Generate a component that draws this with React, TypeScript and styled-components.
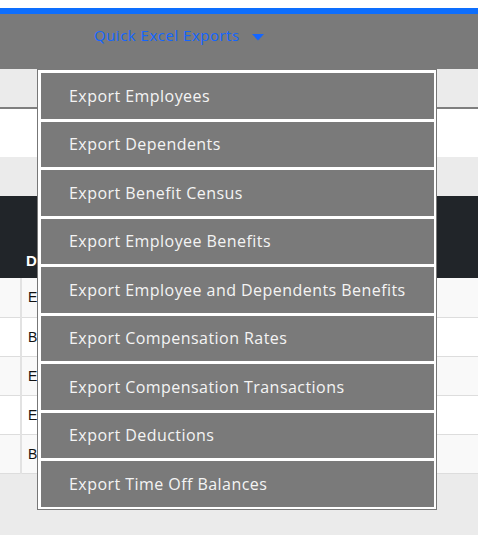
import React from 'react';
import styled, {createGlobalStyle} from 'styled-components';

const GlobalStyle = createGlobalStyle`
  html, body {
    margin: 0;
    padding: 0;
    background: #ebebeb;
  }
  body {
    font-family: "Open Sans", "Liberation Sans", sans-serif;
  }
`;

const exportItems = [
  'Export Employees',
  'Export Dependents',
  'Export Benefit Census',
  'Export Employee Benefits',
  'Export Employee and Dependents Benefits',
  'Export Compensation Rates',
  'Export Compensation Transactions',
  'Export Deductions',
  'Export Time Off Balances',
];

// only the first letter of each row shows beside the open menu
const rows = ['E', 'B', 'E', 'E', 'B'];

const Caret = () => (
  <CaretIcon width='12' height='7' viewBox='0 0 12 7'>
    <path d='M0 0 L12 0 L6 6.5 Z' fill='#1466ff' />
  </CaretIcon>
);

export default function App() {
  return (
    <>
      <GlobalStyle />
      <Page>
        <TopBar>
          <NavItem>
            <NavToggle href='#'>
              Quick Excel Exports
              <Caret />
            </NavToggle>
            <Menu>
              {exportItems.map((label) => (
                <MenuItem key={label}>{label}</MenuItem>
              ))}
            </Menu>
          </NavItem>
        </TopBar>
        <SubBar />
        <WhiteStrip />
        <GreyStrip />
        <Table>
          <thead>
            <tr>
              <HeadCell $narrow />
              <HeadCell>D</HeadCell>
            </tr>
          </thead>
          <tbody>
            {rows.map((r, i) => (
              <Row key={i} $striped={i % 2 === 0}>
                <Cell $narrow />
                <Cell>{r}</Cell>
              </Row>
            ))}
          </tbody>
        </Table>
      </Page>
    </>
  );
}

const Page = styled.div`
  padding-top: 8px;
  background: #ffffff;
  min-height: 100vh;
  box-sizing: border-box;
  display: flex;
  flex-direction: column;
  &::after {
    content: '';
    flex: 1;
    background: #ebebeb;
  }
`;

const TopBar = styled.div`
  height: 55px;
  border-top: 6px solid #0d6efd;
  background: #7a7a7a;
  display: flex;
  align-items: flex-start;
  padding-left: 94px;
  position: relative;
  z-index: 2;
`;

const NavItem = styled.div`
  display: flex;
  align-items: center;
  padding-top: 11px;
`;

const NavToggle = styled.a`
  display: flex;
  align-items: center;
  gap: 12px;
  color: #1466ff;
  text-decoration: none;
  font-size: 15px;
  letter-spacing: 0.5px;
  line-height: 20px;
`;

const CaretIcon = styled.svg`
  margin-top: 4px;
`;

const Menu = styled.div`
  position: absolute;
  top: 55px;
  left: 37px;
  width: 400px;
  box-sizing: border-box;
  background: #ffffff;
  border: 1px solid #777777;
  border-top-color: #7a7a7a;
  padding: 3px 2px 2px 3px;
  display: flex;
  flex-direction: column;
  gap: 3px;
`;

const MenuItem = styled.div`
  height: 45.5px;
  background: #7a7a7a;
  color: #f4f4f4;
  font-size: 16px;
  font-weight: 500;
  letter-spacing: 0.45px;
  display: flex;
  align-items: center;
  padding-left: 28px;
  cursor: pointer;
`;

const SubBar = styled.div`
  height: 38px;
  background: #ebebeb;
  border-bottom: 2px solid #7f7f7f;
`;

const WhiteStrip = styled.div`
  height: 48px;
  background: #ffffff;
`;

const GreyStrip = styled.div`
  height: 39px;
  background: #ebebeb;
`;

const Table = styled.table`
  width: 100%;
  border-collapse: collapse;
  font-family: "Liberation Sans", Arial, sans-serif;
  font-size: 14px;
`;

const HeadCell = styled.th<{$narrow?: boolean}>`
  height: 82px;
  box-sizing: border-box;
  width: ${(p) => (p.$narrow ? '21px' : 'auto')};
  background: #212529;
  color: #ffffff;
  text-align: left;
  vertical-align: bottom;
  padding: 0 0 9px 5px;
  font-weight: bold;
  font-size: 15px;
`;

const Row = styled.tr<{$striped: boolean}>`
  background: ${(p) => (p.$striped ? '#f9f9f9' : '#ffffff')};
`;

const Cell = styled.td<{$narrow?: boolean}>`
  height: 39px;
  box-sizing: border-box;
  border-bottom: 1px solid #dddddd;
  border-right: ${(p) => (p.$narrow ? '2px solid #e2e2e2' : 'none')};
  padding: 0 0 0 6px;
  color: #111111;
  vertical-align: middle;
`;
